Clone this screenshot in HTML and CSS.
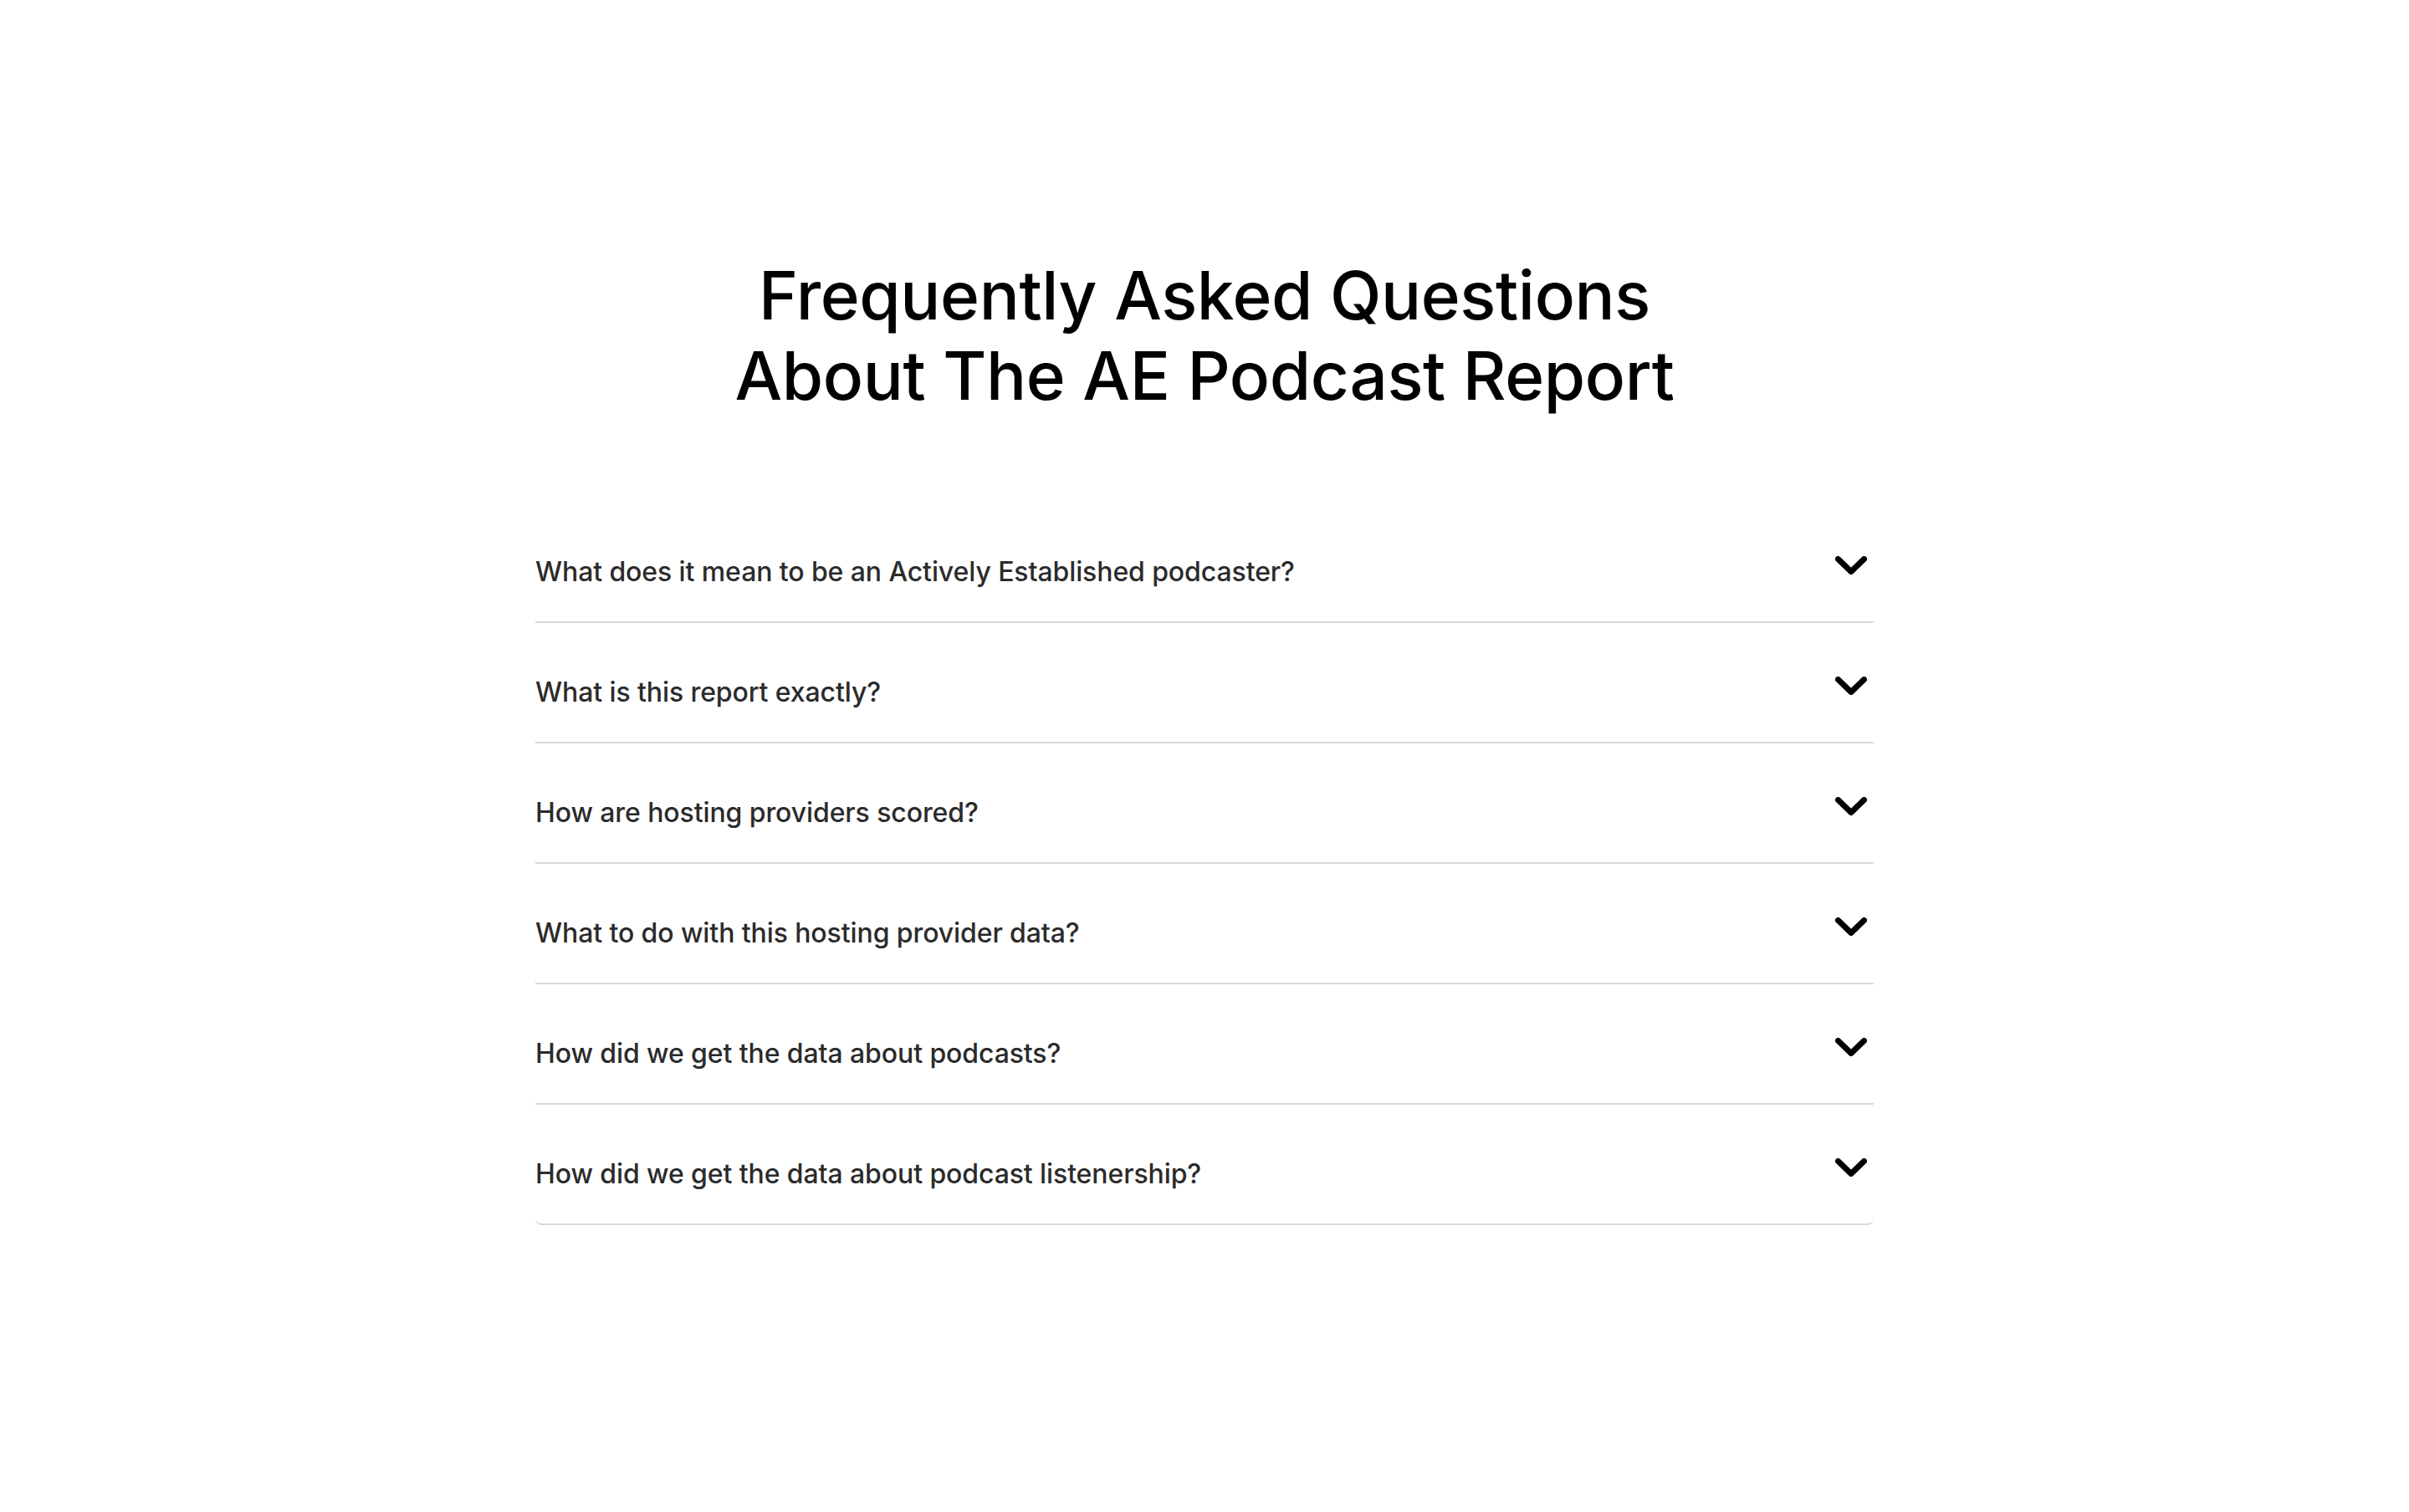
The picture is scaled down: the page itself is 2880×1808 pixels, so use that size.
FILE: index.html
```html
<!DOCTYPE html>
<html lang="en">
<head>
<meta charset="utf-8">
<title>FAQ</title>
<link rel="stylesheet" href="styles.css">
</head>
<body>
<section class="faq">
  <h1 class="faq-title">Frequently Asked Questions<br>About The AE Podcast Report</h1>
  <ul class="faq-list">
    <li class="faq-item"><span class="faq-q">What does it mean to be an Actively Established podcaster?</span><svg class="chev" viewBox="0 0 38 22"><path d="M3.5 3.5 L19 18.5 L34.5 3.5"/></svg></li>
    <li class="faq-item"><span class="faq-q">What is this report exactly?</span><svg class="chev" viewBox="0 0 38 22"><path d="M3.5 3.5 L19 18.5 L34.5 3.5"/></svg></li>
    <li class="faq-item"><span class="faq-q">How are hosting providers scored?</span><svg class="chev" viewBox="0 0 38 22"><path d="M3.5 3.5 L19 18.5 L34.5 3.5"/></svg></li>
    <li class="faq-item"><span class="faq-q">What to do with this hosting provider data?</span><svg class="chev" viewBox="0 0 38 22"><path d="M3.5 3.5 L19 18.5 L34.5 3.5"/></svg></li>
    <li class="faq-item"><span class="faq-q">How did we get the data about podcasts?</span><svg class="chev" viewBox="0 0 38 22"><path d="M3.5 3.5 L19 18.5 L34.5 3.5"/></svg></li>
    <li class="faq-item last"><span class="faq-q">How did we get the data about podcast listenership?</span><svg class="chev" viewBox="0 0 38 22"><path d="M3.5 3.5 L19 18.5 L34.5 3.5"/></svg></li>
  </ul>
</section>
</body>
</html>
```
FILE: styles.css
```css
html, body {
  margin: 0;
  padding: 0;
  background: #ffffff;
}
body {
  font-family: "Inter", "Liberation Sans", sans-serif;
}
.faq {
  width: 1600px;
  margin: 0 auto;
  padding-top: 305px;
}
.faq-title {
  margin: 0;
  text-align: center;
  font-size: 80px;
  line-height: 96px;
  font-weight: 500;
  color: #000000;
  letter-spacing: -0.4px;
}
.faq-list {
  list-style: none;
  margin: 0;
  padding: 0;
  margin-top: 104px;
}
.faq-item {
  display: flex;
  justify-content: space-between;
  align-items: flex-start;
  padding: 63px 8px 39px 0;
  border-bottom: 2px solid #d9d9d9;
}
.faq-item.last {
  border-radius: 0 0 8px 8px;
}
.faq-q {
  font-size: 32px;
  line-height: 40px;
  color: #2b2b2b;
  font-weight: 500;
  letter-spacing: -0.1px;
}
.chev {
  width: 38px;
  height: 22px;
  margin-top: 1px;
  fill: none;
  stroke: #000;
  stroke-width: 7;
  stroke-linecap: round;
  stroke-linejoin: round;
}
```
